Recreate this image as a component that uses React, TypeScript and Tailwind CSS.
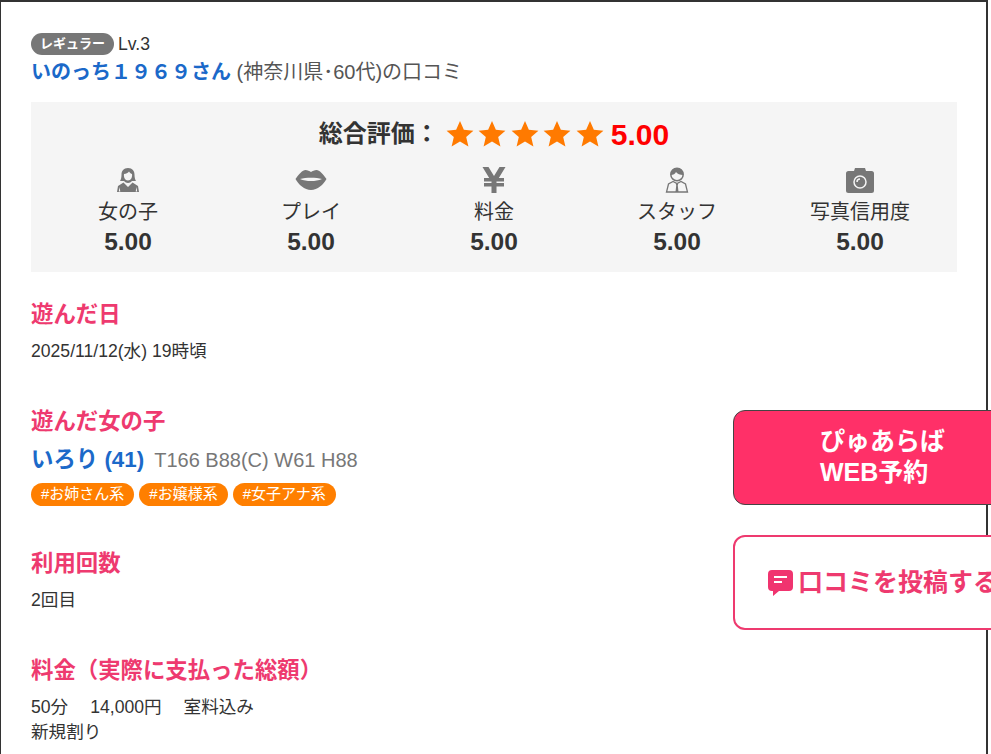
const FONT = '"Liberation Sans", "Noto Sans CJK JP", sans-serif';

function GirlIcon() {
  return (
    <svg width="24" height="26" viewBox="0 0 24 26" fill="#777">
      <path d="M12 1c-4.500 0-6.500 3-6.500 6.500 0 3-.5 5-1.500 6.500h4c1 1.300 2.500 2 4 2s3-.7 4-2h4c-1-1.500-1.500-3.500-1.500-6.500C18.500 4 16.500 1 12 1z" />
      <path d="M8 7c2 0 4-1 5-2.500 1 1.500 2 2.500 3 2.500.5 3-1 6.500-4 6.500S7.500 10 8 7z" fill="#f5f5f5" />
      <path d="M7.500 15.500 2 19l-1 6h22l-1-6-5.500-3.500L12 20z" />
      <path d="M3.500 20 2.800 24.500h1.500zM20.500 20l.7 4.500h-1.500z" fill="#f5f5f5" />
    </svg>
  );
}

function LipsIcon() {
  return (
    <svg width="32" height="22" viewBox="0 0 32 22" fill="#777">
      <path d="M0.500 10C4 5 7.500 1 10.500 1c2 0 4 1 5.500 2 1.500-1 3.500-2 5.500-2 3 0 6.500 4 10 9-3 5.500-9 11-15.500 11S3.500 15.500.5 10z" />
      <path d="M5 10c3-.8 7-1.200 11-1.200s8 .4 11 1.200c-3.500 1.500-7 2-11 2s-7.500-.5-11-2z" fill="#f5f5f5" />
    </svg>
  );
}

function YenIcon() {
  return (
    <svg width="24" height="26" viewBox="0 0 24 26" fill="#777">
      <path d="M0.500 0h6L12 9l5.500-9h6L16.800 11H22v3.500h-7.500V16H22v3.500h-7.500V26h-5v-6.500H2V16h7.500v-1.500H2V11h5.200z" />
    </svg>
  );
}

function StaffIcon() {
  return (
    <svg width="24" height="26" viewBox="0 0 24 26">
      <circle cx="12" cy="7.500" r="6.200" fill="#f5f5f5" stroke="#777" strokeWidth="1.500" />
      <path d="M5.800 8C5.800 3.500 8.500 1 12 1s6.200 2.500 6.200 7c-3 0-6-1-7.200-3-.8 1.800-2.700 3-5.200 3z" fill="#777" />
      <path d="M8 14.500 3.500 17 1.500 25h21l-2-8-4.500-2.500-4 2z" fill="#f5f5f5" stroke="#777" strokeWidth="1.300" />
      <path d="M10.800 16.500h2.400l-.4 2 .7 6.500h-3l.7-6.500z" fill="#777" />
    </svg>
  );
}

function CameraIcon() {
  return (
    <svg width="28" height="26" viewBox="0 0 28 26" fill="#777">
      <path d="M2.500 4H8l1-3h10l1 3h5.500A2.500 2.500 0 0 1 28 6.500v17a2.500 2.500 0 0 1-2.500 2.500h-23A2.500 2.500 0 0 1 0 23.500v-17A2.500 2.500 0 0 1 2.500 4z" />
      <circle cx="14" cy="15" r="6" fill="none" stroke="#f5f5f5" strokeWidth="1.500" />
      <path d="M11 15a3 3 0 0 1 3-3" fill="none" stroke="#f5f5f5" strokeWidth="1.500" />
    </svg>
  );
}

function Star() {
  return (
    <svg width="28" height="28" viewBox="0 0 24 24" fill="#ff7a00">
      <path d="M12 .8l3.300 7.600 8.200.8-6.200 5.400 1.900 8.100L12 18.400l-7.200 4.300 1.900-8.100L.5 9.200l8.200-.8z" />
    </svg>
  );
}

function CommentIcon() {
  return (
    <svg width="25" height="26" viewBox="0 0 25 26" className="shrink-0">
      <path d="M4 0h17a4 4 0 0 1 4 4v13a4 4 0 0 1-4 4H11l-6 5v-5H4a4 4 0 0 1-4-4V4a4 4 0 0 1 4-4z" fill="#f0346f" />
      <path d="M6 7h13M6 12h8" stroke="#fff" strokeWidth="2" />
    </svg>
  );
}

const scores = [
  { label: "女の子", icon: <GirlIcon /> },
  { label: "プレイ", icon: <LipsIcon /> },
  { label: "料金", icon: <YenIcon /> },
  { label: "スタッフ", icon: <StaffIcon /> },
  { label: "写真信用度", icon: <CameraIcon /> },
];

const tags = ["#お姉さん系", "#お嬢様系", "#女子アナ系"];

function Heading({ children }: { children: React.ReactNode }) {
  return <h3 className="text-[22.4px] leading-[30px] font-bold text-[#ee3a6f]">{children}</h3>;
}

export default function App() {
  return (
    <div className="relative h-[754px] w-full overflow-hidden bg-white text-[#333]" style={{ fontFamily: FONT }}>
      <div className="h-[754px] w-[988px] border-t-2 border-r-2 border-l border-[#333] pt-[31px] pr-[30px] pl-[30px]">
        {/* Reviewer */}
        <div className="flex h-[22px] items-center">
          <span className="flex h-[22px] w-[83px] items-center justify-center rounded-full bg-[#777] text-[13px] font-bold text-white">
            レギュラー
          </span>
          <span className="ml-1 text-[17.6px]">Lv.3</span>
        </div>
        <p className="mt-[2px] h-[30px] text-[20px] leading-[30px] text-[#555]">
          <span className="font-bold text-[#1b69c9]">いのっち１９６９さん</span> (神奈川県･60代)の口コミ
        </p>

        {/* Score panel */}
        <div className="mt-[15px] h-[170px] w-[926px] bg-[#f5f5f5] pt-[16px]">
          <div className="flex h-[32px] items-center justify-center">
            <span className="mr-[7px] text-[24px] font-bold">総合評価：</span>
            <div className="flex gap-[4.500px]">
              <Star />
              <Star />
              <Star />
              <Star />
              <Star />
            </div>
            <span className="ml-[7px] text-[30px] font-bold text-[#ff0000]">5.00</span>
          </div>
          <div className="grid grid-cols-5 px-[5.500px]">
            {scores.map((s) => (
              <div key={s.label} className="flex flex-col items-center">
                <div className="mt-[17px] flex h-[26px] items-center justify-center">{s.icon}</div>
                <span className="mt-[4px] text-[20px] leading-[30px]">{s.label}</span>
                <span className="text-[24.500px] leading-[30px] font-bold">5.00</span>
              </div>
            ))}
          </div>
        </div>

        {/* Review details */}
        <div className="mt-[28px]">
          <Heading>遊んだ日</Heading>
          <p className="mt-[9px] text-[17.6px] leading-[24px]">2025/11/12(水) 19時頃</p>
        </div>

        <div className="mt-[44px]">
          <Heading>遊んだ女の子</Heading>
          <div className="mt-[6px] flex items-baseline">
            <span className="text-[22.4px] font-bold text-[#1b69c9]">いろり (41)</span>
            <span className="ml-[10px] text-[20px] text-[#777]">T166 B88(C) W61 H88</span>
          </div>
          <div className="mt-[6px] flex gap-[5px]">
            {tags.map((t) => (
              <span key={t} className="flex h-[23px] items-center rounded-full bg-[#ff7f00] px-[10px] text-[15px] text-white">
                {t}
              </span>
            ))}
          </div>
        </div>

        <div className="mt-[43px]">
          <Heading>利用回数</Heading>
          <p className="mt-[9px] text-[17.6px] leading-[24px]">2回目</p>
        </div>

        <div className="mt-[44px]">
          <Heading>料金（実際に支払った総額）</Heading>
          <div className="mt-[9px] flex gap-[22px] text-[17.6px] leading-[24px]">
            <span>50分</span>
            <span>14,000円</span>
            <span>室料込み</span>
          </div>
          <p className="mt-[1px] text-[17.6px] leading-[24px]">新規割り</p>
        </div>
      </div>

      {/* Floating buttons */}
      <div className="absolute top-[410px] left-[733px] h-[95px] w-[300px] rounded-[12px] border border-[#444] bg-[#ff3068] pt-[15px] pl-[86px] text-[25px] leading-[31px] font-bold text-white">
        ぴゅあらば
        <br />
        WEB予約
      </div>
      <div className="absolute top-[535px] left-[733px] flex h-[95px] w-[300px] items-center rounded-[12px] border-2 border-[#ee3a6f] bg-white pl-[33px] text-[25px] font-bold whitespace-nowrap text-[#ee3a6f]">
        <CommentIcon />
        <span className="ml-[5px]">口コミを投稿する</span>
      </div>
    </div>
  );
}
